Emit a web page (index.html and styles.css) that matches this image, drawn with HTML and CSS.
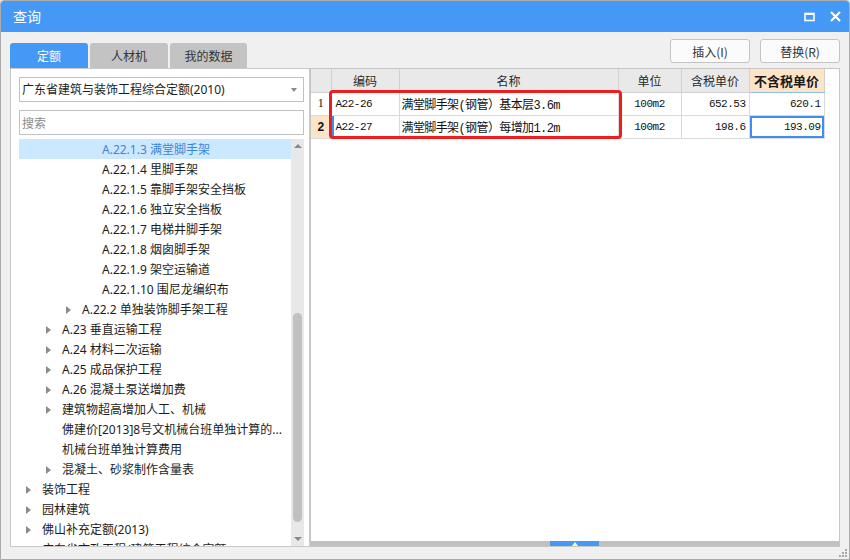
FILE: index.html
```html
<!DOCTYPE html>
<html lang="zh-CN">
<head>
<meta charset="utf-8">
<title>查询</title>
<link rel="stylesheet" href="styles.css">
</head>
<body>
<div class="window">
  <div class="titlebar">
    <span class="title">查询</span>
    <div class="controls">
      <svg class="ico" width="11" height="10" viewBox="0 0 11 10"><rect x="1" y="1.5" width="9" height="7" fill="none" stroke="#fff" stroke-width="1.6"/><rect x="1" y="1" width="9" height="2" fill="#fff"/></svg>
      <svg class="ico" width="11" height="11" viewBox="0 0 11 11"><path d="M1 1 L10 10 M10 1 L1 10" stroke="#fff" stroke-width="2.2"/></svg>
    </div>
  </div>
  <div class="main">
    <div class="tabs">
      <div class="tab active">定额</div>
      <div class="tab">人材机</div>
      <div class="tab narrow">我的数据</div>
    </div>
    <div class="actions">
      <button class="btn">插入(I)</button>
      <button class="btn">替换(R)</button>
    </div>

    <div class="left-panel">
      <div class="combo">广东省建筑与装饰工程综合定额(2010)<span class="caret"></span></div>
      <input class="search" type="text" placeholder="搜索">
      <div class="tree-wrap">
        <div class="tree">
          <div class="row l3 sel"><span class="tw"></span><span class="lbl">A.22.1.3 满堂脚手架</span></div>
          <div class="row l3"><span class="tw"></span><span class="lbl">A.22.1.4 里脚手架</span></div>
          <div class="row l3"><span class="tw"></span><span class="lbl">A.22.1.5 靠脚手架安全挡板</span></div>
          <div class="row l3"><span class="tw"></span><span class="lbl">A.22.1.6 独立安全挡板</span></div>
          <div class="row l3"><span class="tw"></span><span class="lbl">A.22.1.7 电梯井脚手架</span></div>
          <div class="row l3"><span class="tw"></span><span class="lbl">A.22.1.8 烟囱脚手架</span></div>
          <div class="row l3"><span class="tw"></span><span class="lbl">A.22.1.9 架空运输道</span></div>
          <div class="row l3"><span class="tw"></span><span class="lbl">A.22.1.10 围尼龙编织布</span></div>
          <div class="row l2"><span class="tw arrow"></span><span class="lbl">A.22.2 单独装饰脚手架工程</span></div>
          <div class="row l1"><span class="tw arrow"></span><span class="lbl">A.23 垂直运输工程</span></div>
          <div class="row l1"><span class="tw arrow"></span><span class="lbl">A.24 材料二次运输</span></div>
          <div class="row l1"><span class="tw arrow"></span><span class="lbl">A.25 成品保护工程</span></div>
          <div class="row l1"><span class="tw arrow"></span><span class="lbl">A.26 混凝土泵送增加费</span></div>
          <div class="row l1"><span class="tw arrow"></span><span class="lbl">建筑物超高增加人工、机械</span></div>
          <div class="row l1"><span class="tw"></span><span class="lbl">佛建价[2013]8号文机械台班单独计算的...</span></div>
          <div class="row l1"><span class="tw"></span><span class="lbl">机械台班单独计算费用</span></div>
          <div class="row l1"><span class="tw arrow"></span><span class="lbl">混凝土、砂浆制作含量表</span></div>
          <div class="row l0"><span class="tw arrow"></span><span class="lbl">装饰工程</span></div>
          <div class="row l0"><span class="tw arrow"></span><span class="lbl">园林建筑</span></div>
          <div class="row l0"><span class="tw arrow"></span><span class="lbl">佛山补充定额(2013)</span></div>
          <div class="row l0"><span class="tw arrow"></span><span class="lbl">广东省市政工程/建筑工程综合定额</span></div>
        </div>
        <div class="vscroll">
          <div class="vs-btn"><span class="tri-up"></span></div>
          <div class="vs-track"><div class="vs-thumb"></div></div>
          <div class="vs-btn"><span class="tri-down"></span></div>
        </div>
      </div>
    </div>

    <div class="grid-panel">
      <div class="grid-body">
        <table class="grid">
          <colgroup>
            <col class="c-no"><col class="c-code"><col class="c-name"><col class="c-unit"><col class="c-tax"><col class="c-notax">
          </colgroup>
          <thead>
            <tr><th></th><th>编码</th><th>名称</th><th>单位</th><th>含税单价</th><th class="hl">不含税单价</th></tr>
          </thead>
          <tbody>
            <tr><td class="no">1</td><td class="code">A22-26</td><td class="name">满堂脚手架(钢管）基本层3.6m</td><td class="unit">100m2</td><td class="num">652.53</td><td class="num">620.1</td></tr>
            <tr class="cur"><td class="no">2</td><td class="code">A22-27</td><td class="name">满堂脚手架(钢管）每增加1.2m</td><td class="unit">100m2</td><td class="num">198.6</td><td class="num focus">193.09</td></tr>
          </tbody>
        </table>
        <div class="annot"></div>
      </div>
      <div class="hscroll"><div class="hthumb"><span class="tri-up white"></span></div></div>
    </div>
  </div>
  <svg class="grip" width="10" height="10" viewBox="0 0 10 10"><g fill="#a6a6a6"><rect x="7" y="1" width="2" height="2"/><rect x="4" y="4" width="2" height="2"/><rect x="7" y="4" width="2" height="2"/><rect x="1" y="7" width="2" height="2"/><rect x="4" y="7" width="2" height="2"/><rect x="7" y="7" width="2" height="2"/></g></svg>
</div>
</body>
</html>
```
FILE: styles.css
```css
* { box-sizing: border-box; }
html, body { margin: 0; padding: 0; }
body {
  width: 850px; height: 560px; overflow: hidden;
  background: #f0f0f0;
  font-family: "Noto Sans", "Noto Sans CJK SC", sans-serif;
  font-size: 12px; color: #1c1c1c;
}
.window {
  width: 850px; height: 560px;
  border: 1px solid #ababab; border-radius: 4px 4px 0 0;
  background: #f0f0f0;
  display: flex; flex-direction: column;
  position: relative; overflow: hidden;
}
.titlebar {
  height: 31px; flex: none;
  background: #4499f7;
  display: flex; align-items: center; justify-content: space-between;
  padding: 0 8px 0 12px;
}
.title { color: #fff; font-size: 14px; line-height: 31px; font-family: "Noto Sans CJK SC", sans-serif; }
.controls { display: flex; align-items: center; gap: 15px; }
.ico { display: block; }

.main {
  flex: 1; min-height: 0;
  display: grid;
  grid-template-columns: 300px 530px;
  grid-template-rows: 29px 1fr;
  padding: 7px 9px 12px 9px;
}
.tabs { display: flex; gap: 2px; align-self: end; }
.tab {
  width: 78px; height: 25px; line-height: 25px; text-align: center;
  background: #c3c3c3; color: #333; border-radius: 3px 3px 0 0;
  font-family: "Noto Sans CJK SC", sans-serif; font-size: 12px;
}
.tab.narrow { width: 77px; }
.tab.active { background: #4499f7; color: #fff; }

.actions { display: flex; justify-content: flex-end; align-items: flex-start; gap: 10px; }
.btn {
  width: 80px; height: 24px; padding: 0;
  background: #fbfbfb; border: 1px solid #c4c4c4; border-radius: 3px;
  font-family: "Noto Sans CJK SC", sans-serif; font-size: 12px; color: #333;
}

.left-panel {
  background: #fff; border: 1px solid #c9c9c9;
  padding: 8px 5px 0 8px;
  display: flex; flex-direction: column; min-height: 0; overflow: hidden;
}
.combo {
  height: 25px; border: 1px solid #c2c2c2; line-height: 24px;
  padding-left: 2px; position: relative; white-space: nowrap; flex: none;
}
.caret {
  position: absolute; right: 6px; top: 10px;
  border-top: 4px solid #8a8a8a; border-left: 3.5px solid transparent; border-right: 3.5px solid transparent;
}
.search {
  margin-top: 8px; height: 25px; width: 100%; flex: none;
  border: 1px solid #c2c2c2; padding: 1px 2px 0; outline: none;
  font-family: "Noto Sans", "Noto Sans CJK SC", sans-serif; font-size: 12px;
}
.search::placeholder { color: #8c8c8c; }

.tree-wrap { margin-top: 4px; flex: 1; min-height: 0; display: flex; overflow: hidden; }
.tree { flex: 1; overflow: hidden; }
.row { height: 20px; padding-top: 2px; display: flex; align-items: center; white-space: nowrap; }
.row.l0 { padding-left: 7px; }
.row.l1 { padding-left: 27px; }
.row.l2 { padding-left: 47px; }
.row.l3 { padding-left: 67px; }
.row.sel { background: #cce8ff; color: #3a86d8; }
.tw { width: 16px; flex: none; height: 18px; display: flex; align-items: center; }
.tw.arrow::before {
  content: ""; display: block;
  border-left: 5px solid #8c8c8c; border-top: 4px solid transparent; border-bottom: 4px solid transparent;
}
.lbl { overflow: hidden; line-height: 18px; }

.vscroll { width: 13px; flex: none; background: #e8e8e8; display: flex; flex-direction: column; }
.vs-btn { height: 14px; flex: none; display: flex; align-items: center; justify-content: center; }
.vs-track { flex: 1; padding: 160px 2px 0 2px; }
.vs-thumb { height: 209px; width: 9px; border-radius: 5px; background: #c0c0c0; }
.tri-up { border-bottom: 4px solid #8a8a8a; border-left: 4px solid transparent; border-right: 4px solid transparent; }
.tri-down { border-top: 4px solid #8a8a8a; border-left: 4px solid transparent; border-right: 4px solid transparent; }
.tri-up.white { border-bottom: 4px solid #fff; border-left-width: 3.5px; border-right-width: 3.5px; }

.grid-panel {
  background: #fff; border: 1px solid #c6c6c6;
  display: flex; flex-direction: column; min-height: 0;
}
.grid-body { flex: 1; position: relative; }
.grid { border-collapse: collapse; table-layout: fixed; width: 513px; }
.c-no { width: 20px; }
.c-code { width: 68px; }
.c-name { width: 219px; }
.c-unit { width: 63px; }
.c-tax { width: 68px; }
.c-notax { width: 75px; }
.grid th, .grid td { height: 23px; padding: 0; white-space: nowrap; overflow: hidden; }
.grid th {
  background: #e9e9e9; font-weight: normal; color: #2a2a2a;
  border-right: 1px solid #d0d0d0; border-bottom: 1px solid #d0d0d0;
  font-family: "Noto Sans CJK SC", sans-serif; font-size: 12px; text-align: center;
}
.grid th.hl { background: #fde4c6; font-weight: bold; font-size: 13px; border-bottom: 1px solid #8dbcf2; color: #1a1a1a; }
.grid td {
  border-right: 1px solid #dadada; border-bottom: 1px solid #dadada;
  font-family: "Liberation Mono", "Noto Sans CJK SC", monospace; font-size: 11px; letter-spacing: -0.5px; color: #111;
}
.grid td.no { text-align: center; font-size: 12px; letter-spacing: 0; font-family: "Liberation Serif", serif; }
.grid tr.cur td.no { background: #fde4c6; font-weight: bold; font-family: "Liberation Sans", sans-serif; }
.grid td.code { padding-left: 4px; }
.grid tr.cur td.code { box-shadow: inset 2px 0 0 #3f8ff0; }
.grid td.name { padding-left: 2px; font-size: 12px; letter-spacing: -0.6px; }
.grid td.unit { text-align: center; }
.grid td.num { text-align: right; padding-right: 3px; }
.grid td.focus { box-shadow: inset 0 0 0 2px #3f8ff0; }

.annot {
  position: absolute; left: 18px; top: 21px; width: 293px; height: 49px;
  border: 3px solid #ef1d1d; border-radius: 4px;
}
.hscroll { height: 5px; flex: none; background: #c0c0c0; }
.hthumb {
  margin-left: 239px; width: 49px; height: 5px; background: #4499f7;
  display: flex; justify-content: center; align-items: flex-end;
}
.grip { position: absolute; right: 1px; bottom: 1px; }
```
